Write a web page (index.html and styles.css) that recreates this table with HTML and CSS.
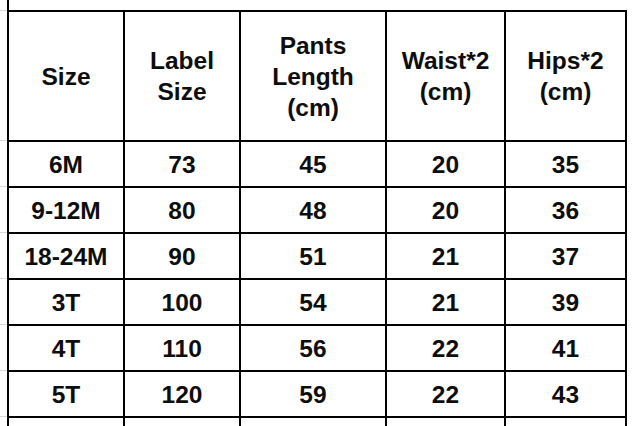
FILE: index.html
```html
<!DOCTYPE html>
<html>
<head>
<meta charset="utf-8">
<link rel="stylesheet" href="styles.css">
</head>
<body>
<div class="page">
  <div class="gutter">
    <div class="g g-top"></div>
    <div class="g g-head"></div>
    <div class="g g-row"></div>
    <div class="g g-row"></div>
    <div class="g g-row"></div>
    <div class="g g-row"></div>
    <div class="g g-row"></div>
    <div class="g g-row"></div>
    <div class="g g-last"></div>
  </div>
  <div class="sheet">
    <div class="title"></div>
    <div class="grid">
      <div class="cell head">Size</div>
      <div class="cell head">Label<br>Size</div>
      <div class="cell head">Pants<br>Length<br>(cm)</div>
      <div class="cell head">Waist*2<br>(cm)</div>
      <div class="cell head">Hips*2<br>(cm)</div>

      <div class="cell">6M</div><div class="cell">73</div><div class="cell">45</div><div class="cell">20</div><div class="cell">35</div>
      <div class="cell">9-12M</div><div class="cell">80</div><div class="cell">48</div><div class="cell">20</div><div class="cell">36</div>
      <div class="cell">18-24M</div><div class="cell">90</div><div class="cell">51</div><div class="cell">21</div><div class="cell">37</div>
      <div class="cell">3T</div><div class="cell">100</div><div class="cell">54</div><div class="cell">21</div><div class="cell">39</div>
      <div class="cell">4T</div><div class="cell">110</div><div class="cell">56</div><div class="cell">22</div><div class="cell">41</div>
      <div class="cell">5T</div><div class="cell">120</div><div class="cell">59</div><div class="cell">22</div><div class="cell">43</div>
      <div class="cell"></div><div class="cell"></div><div class="cell"></div><div class="cell"></div><div class="cell"></div>
    </div>
  </div>
</div>
</body>
</html>
```

FILE: styles.css
```css
html, body {
  margin: 0;
  padding: 0;
  background: #ffffff;
  width: 637px;
  height: 426px;
  overflow: hidden;
}

.page {
  display: flex;
  align-items: flex-start;
  font-family: "Liberation Sans", Arial, sans-serif;
  font-weight: bold;
  color: #0d0d0d;
}

.gutter {
  width: 7px;
  display: flex;
  flex-direction: column;
  flex: none;
}

.g {
  box-sizing: border-box;
  border-top: 1px solid #d6d6d6;
}

.g-top {
  height: 10px;
  border-top: none;
}

.g-head {
  height: 130px;
}

.g-row {
  height: 46px;
}

.g-last {
  height: 10px;
}

.sheet {
  display: flex;
  flex-direction: column;
}

.title {
  height: 10px;
  border-left: 2px solid #000;
}

.grid {
  display: grid;
  grid-template-columns: 114px 114px 144px 117px 119px;
  grid-template-rows: 128px repeat(6, 44px) 8px;
  gap: 2px;
  padding: 2px 2px 0 2px;
  background: #000;
}

.cell {
  background: #fff;
  display: flex;
  align-items: center;
  justify-content: center;
  text-align: center;
  font-size: 24.5px;
  line-height: 31px;
}
```
